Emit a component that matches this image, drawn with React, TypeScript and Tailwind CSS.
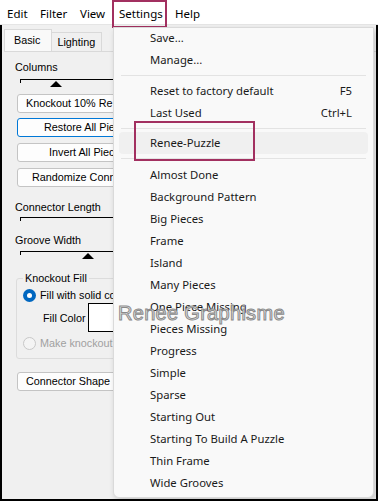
import React from "react";

const menuFont = { fontFamily: '"Noto Sans", "Open Sans", sans-serif' };

function Slider({ label, thumb, gap }: { label: string; thumb?: number; gap: number }) {
  return (
    <div className="flex flex-col">
      <div className="pl-[11px] text-[10.8px] leading-[14px] text-black">{label}</div>
      <div className="relative ml-[16px] h-[10px] w-[120px] border-t border-black" style={{ marginTop: gap }}>
        <div className="absolute left-0 top-0 h-[3px] w-px bg-black" />
        {thumb !== undefined && (
          <div
            className="absolute top-[1px] h-0 w-0 border-x-[6px] border-b-[6px] border-x-transparent border-b-black"
            style={{ left: thumb }}
          />
        )}
      </div>
    </div>
  );
}

function Btn({ text, pl, focus, mt }: { text: string; pl: number; focus?: boolean; mt: number }) {
  return (
    <div
      className={
        "ml-[13px] flex h-[19px] w-[140px] items-center rounded-[3px] border bg-[#fdfdfd] text-[10.8px] text-black " +
        (focus ? "border-[#0078d7]" : "border-[#c4c4c4]")
      }
      style={{ paddingLeft: pl, marginTop: mt }}
    >
      <span className="whitespace-nowrap">{text}</span>
    </div>
  );
}

const items = [
  "Almost Done",
  "Background Pattern",
  "Big Pieces",
  "Frame",
  "Island",
  "Many Pieces",
  "One Piece Missing",
  "Pieces Missing",
  "Progress",
  "Simple",
  "Sparse",
  "Starting Out",
  "Starting To Build A Puzzle",
  "Thin Frame",
  "Wide Grooves",
];

function Item({ text, sc }: { text: string; sc?: string }) {
  return (
    <div className="flex h-[22px] items-center pl-[36px] pr-[21px] text-[11.3px] text-[#1a1a1a]">
      <span className="flex-1">{text}</span>
      {sc && <span>{sc}</span>}
    </div>
  );
}

export default function App() {
  return (
    <div className="relative h-[501px] w-[378px] overflow-hidden bg-[#f0f0f0]" style={{ fontFamily: '"Liberation Sans", Arial, sans-serif' }}>
      {/* menu bar */}
      <div className="flex h-[25px] items-center border-b border-[#e5e5e5] bg-white pt-[4px] text-[11.5px] text-black" style={menuFont}>
        <span className="ml-[7px] w-[33px]">Edit</span>
        <span className="w-[40px]">Filter</span>
        <span className="w-[39px]">View</span>
        <span className="w-[56px]">Settings</span>
        <span>Help</span>
      </div>
      {/* settings highlight box */}
      <div className="absolute left-[112px] top-0 h-[28px] w-[55px] border-2 border-[#a23060]" />

      {/* body with black frame */}
      <div className="flex h-[476px] border-b-2 border-l-2 border-r-2 border-black">
        <div className="flex flex-1 flex-col">
          {/* tabs */}
          <div className="mt-[4px] flex items-end pl-[2px] text-[10.8px]">
            <div className="flex h-[22px] items-center border border-b-0 border-[#d9d9d9] bg-[#f9f9f9] pl-[9px] pr-[11px]">Basic</div>
            <div className="flex h-[19px] items-center border border-b-0 border-l-0 border-[#d9d9d9] bg-[#f0f0f0] pl-[5px] pr-[6px]">Lighting</div>
          </div>
          <div className="ml-[2px] flex flex-1 flex-col border-t border-[#d9d9d9] pt-[8px]">
            <Slider label="Columns" thumb={30} gap={5} />
            <Btn text="Knockout 10% Re" pl={8} mt={5} />
            <Btn text="Restore All Pieces" pl={26} focus mt={5} />
            <Btn text="Invert All Pieces" pl={31} mt={6} />
            <Btn text="Randomize Connectors" pl={14} mt={6} />
            <div className="mt-[13px]">
              <Slider label="Connector Length" gap={3} />
            </div>
            <div className="mt-[6px]">
              <Slider label="Groove Width" thumb={62} gap={4} />
            </div>
            {/* group box */}
            <div className="relative ml-[12px] mt-[17px] h-[81px] w-[130px] rounded-[3px] border border-[#dcdcdc]">
              <div className="absolute -top-[8px] left-[6px] bg-[#f0f0f0] px-[2px] text-[10.8px] leading-[14px]">Knockout Fill</div>
              <div className="mt-[8px] flex items-center pl-[6px] text-[10.8px]">
                <div className="flex h-[13px] w-[13px] items-center justify-center rounded-full bg-[#0067c0]">
                  <div className="h-[5px] w-[5px] rounded-full bg-white" />
                </div>
                <span className="ml-[4px] whitespace-nowrap">Fill with solid color</span>
              </div>
              <div className="flex items-center text-[10.8px]">
                <span className="ml-[26px] w-[45px]">Fill Color</span>
                <div className="h-[29px] w-[40px] border border-black bg-white" />
              </div>
              <div className="mt-[3px] flex items-center pl-[6px] text-[10.8px] text-[#a0a0a0]">
                <div className="h-[13px] w-[13px] rounded-full border border-[#c8c8c8] bg-[#f4f4f4]" />
                <span className="ml-[4px] whitespace-nowrap">Make knockout</span>
              </div>
            </div>
            <Btn text="Connector Shape" pl={8} mt={13} />
          </div>
        </div>
      </div>

      {/* dropdown menu */}
      <div
        className="absolute left-[113px] top-[27px] flex h-[471px] w-[261px] flex-col rounded-b-[6px] border border-[#dadada] bg-[#f9f9f9] shadow-[2px_3px_6px_rgba(0,0,0,0.18)]"
        style={menuFont}
      >
        <div className="-mt-[1px]">
          <Item text="Save..." />
        </div>
        <Item text="Manage..." />
        <div className="mx-[7px] my-[4px] h-px bg-[#e3e3e3]" />
        <Item text="Reset to factory default" sc="F5" />
        <Item text="Last Used" sc="Ctrl+L" />
        <div className="mx-[7px] mb-[3px] mt-[4px] h-px bg-[#e3e3e3]" />
        <div className="mx-[5px] flex h-[22px] items-center rounded-[4px] bg-[#f0f0f0] pl-[31px] text-[11.3px] text-[#1a1a1a]">
          Renee-Puzzle
        </div>
        <div className="mx-[7px] mb-[5px] mt-[4px] h-px bg-[#e3e3e3]" />
        {items.map((t) => (
          <Item key={t} text={t} />
        ))}
      </div>
      {/* Renee-Puzzle highlight box */}
      <div className="absolute left-[134px] top-[121px] h-[40px] w-[121px] border-2 border-[#a23060]" />

      {/* watermark */}
      <div
        className="absolute left-[118px] top-[302px] whitespace-nowrap text-[20px] leading-[22px] tracking-[0.3px] text-[#ececec] [-webkit-text-stroke:1px_#8a8a8a]"
        style={{ fontFamily: '"Liberation Sans", Arial, sans-serif' }}
      >
        Renee Graphisme
      </div>
    </div>
  );
}
